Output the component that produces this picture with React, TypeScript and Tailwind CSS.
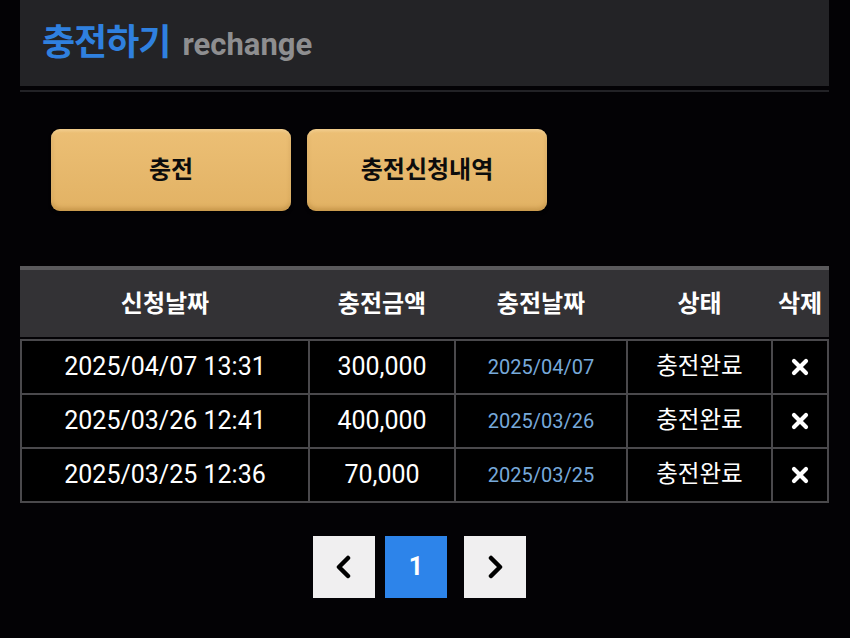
import React from 'react';

interface ChargeRow {
  requested: string;
  amount: string;
  chargedOn: string;
  status: string;
}

const ROWS: ChargeRow[] = [
  { requested: '2025/04/07 13:31', amount: '300,000', chargedOn: '2025/04/07', status: '충전완료' },
  { requested: '2025/03/26 12:41', amount: '400,000', chargedOn: '2025/03/26', status: '충전완료' },
  { requested: '2025/03/25 12:36', amount: '70,000', chargedOn: '2025/03/25', status: '충전완료' },
];

const COLS = 'grid grid-cols-[286px_144px_170px_143px_54px] gap-[2px]';

const DeleteIcon = () => (
  <svg width="18" height="18" viewBox="0 0 18 18">
    <path d="M3 3 L15 15 M15 3 L3 15" stroke="#fff" strokeWidth="4.2" strokeLinecap="round" />
  </svg>
);

const Chevron = ({ dir }: { dir: 'left' | 'right' }) => (
  <svg width="22" height="24" viewBox="0 0 22 24">
    <path
      d={dir === 'left' ? 'M15 3 L6 12 L15 21' : 'M7 3 L16 12 L7 21'}
      fill="none"
      stroke="#000"
      strokeWidth="4.5"
      strokeLinecap="round"
      strokeLinejoin="round"
    />
  </svg>
);

const ActionButton = ({ label }: { label: string }) => (
  <button className="w-[240px] h-[82px] rounded-[9px] bg-gradient-to-b from-[#ecbf75] to-[#e2b264] shadow-[inset_0_-3px_4px_rgba(150,100,30,0.35),inset_0_2px_3px_rgba(255,235,190,0.4),0_2px_3px_rgba(0,0,0,0.6)] text-[24px] font-bold text-[#0c0c0c]">
    {label}
  </button>
);

export default function App() {
  return (
    <div
      className="w-[850px] h-[638px] bg-[#030205] overflow-hidden"
      style={{ fontFamily: "Roboto, 'Noto Sans CJK KR', sans-serif" }}
    >
      <div className="ml-[20px] w-[809px]">
        {/* title bar */}
        <div className="h-[86px] bg-[#232326] flex items-center pl-[22px] gap-[12px]">
          <span className="text-[36px] font-bold text-[#2f80df] tracking-[-1px]">충전하기</span>
          <span className="text-[31px] font-bold text-[#8e8e90] pt-[4px]">rechange</span>
        </div>
        <div className="mt-[4px] h-[2px] bg-[#222226]" />

        {/* actions */}
        <div className="flex gap-[16px] pl-[31px] mt-[37px]">
          <ActionButton label="충전" />
          <ActionButton label="충전신청내역" />
        </div>

        {/* table */}
        <div className="mt-[55px]">
          <div className={`${COLS} px-[2px] h-[71px] bg-[#333235] border-t-[4px] border-[#5a595c] items-center`}>
            {['신청날짜', '충전금액', '충전날짜', '상태', '삭제'].map((h) => (
              <div key={h} className="text-center text-[24px] font-bold text-white">
                {h}
              </div>
            ))}
          </div>
          <div className={`${COLS} mt-[2px] p-[2px] bg-[#4a494c]`}>
            {ROWS.map((r) => (
              <React.Fragment key={r.requested}>
                <div className="h-[52px] bg-black flex items-center justify-center text-[25px] text-white">
                  {r.requested}
                </div>
                <div className="h-[52px] bg-black flex items-center justify-center text-[25px] text-white">
                  {r.amount}
                </div>
                <div className="h-[52px] bg-black flex items-center justify-center text-[20px] text-[#77a9da]">
                  {r.chargedOn}
                </div>
                <div className="h-[52px] bg-black flex items-center justify-center text-[23.5px] text-white">
                  {r.status}
                </div>
                <div className="h-[52px] bg-black flex items-center justify-center">
                  <DeleteIcon />
                </div>
              </React.Fragment>
            ))}
          </div>
        </div>

        {/* pagination */}
        <div className="flex justify-center mt-[33px] pr-[10px]">
          <button className="w-[62px] h-[62px] bg-[#f0eff0] flex items-center justify-center mr-[10px]">
            <Chevron dir="left" />
          </button>
          <button className="w-[62px] h-[62px] bg-[#2d84ea] text-white text-[25px] font-bold mr-[17px]">1</button>
          <button className="w-[62px] h-[62px] bg-[#f0eff0] flex items-center justify-center">
            <Chevron dir="right" />
          </button>
        </div>
      </div>
    </div>
  );
}
